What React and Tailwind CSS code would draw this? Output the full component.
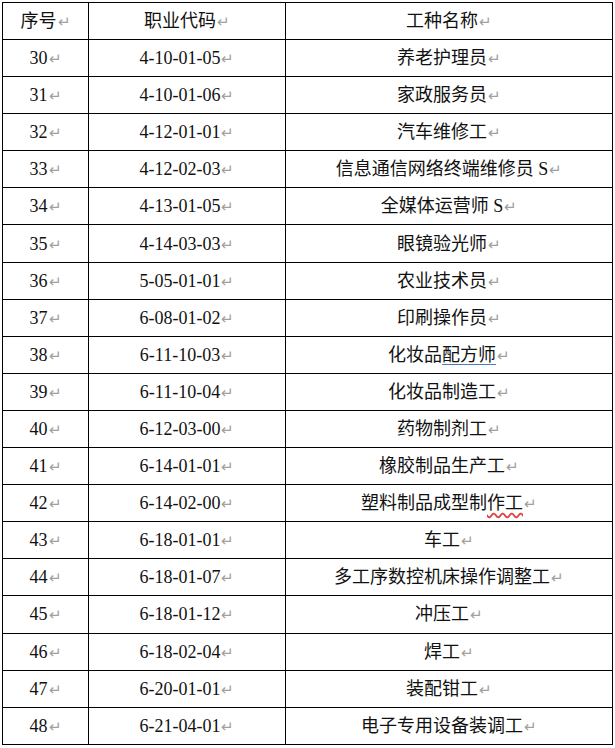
const rows = [
  ["30", "4-10-01-05", "养老护理员"],
  ["31", "4-10-01-06", "家政服务员"],
  ["32", "4-12-01-01", "汽车维修工"],
  ["33", "4-12-02-03", "信息通信网络终端维修员 S"],
  ["34", "4-13-01-05", "全媒体运营师 S"],
  ["35", "4-14-03-03", "眼镜验光师"],
  ["36", "5-05-01-01", "农业技术员"],
  ["37", "6-08-01-02", "印刷操作员"],
  ["38", "6-11-10-03", "化妆品配方师"],
  ["39", "6-11-10-04", "化妆品制造工"],
  ["40", "6-12-03-00", "药物制剂工"],
  ["41", "6-14-01-01", "橡胶制品生产工"],
  ["42", "6-14-02-00", "塑料制品成型制作工"],
  ["43", "6-18-01-01", "车工"],
  ["44", "6-18-01-07", "多工序数控机床操作调整工"],
  ["45", "6-18-01-12", "冲压工"],
  ["46", "6-18-02-04", "焊工"],
  ["47", "6-20-01-01", "装配钳工"],
  ["48", "6-21-04-01", "电子专用设备装调工"],
]

function Mark() {
  return <span className="text-[15px] text-[#a0a0a0] ml-[1px]">↵</span>
}

function Name({ text }) {
  if (text === "化妆品配方师") {
    return (
      <>
        化妆品<span className="underline decoration-[#4a7ebb] underline-offset-[3px]">配方师</span>
      </>
    )
  }
  if (text === "塑料制品成型制作工") {
    return (
      <>
        塑料制品成型制<span className="underline decoration-wavy decoration-[#e04040] underline-offset-[3px]">作工</span>
      </>
    )
  }
  return text
}

export default function App() {
  const font = { fontFamily: '"Liberation Serif", "Noto Sans CJK SC", serif' }
  return (
    <div className="w-[615px] h-[748px] bg-white pt-[2px] pl-[2px]" style={font}>
      <table className="border-collapse text-[#111] leading-none">
        <colgroup>
          <col className="w-[86px]" />
          <col className="w-[197px]" />
          <col className="w-[327px]" />
        </colgroup>
        <thead>
          <tr className="h-[37px]">
            <th className="border border-black font-normal text-[18px]">序号<Mark /></th>
            <th className="border border-black font-normal text-[18px]">职业代码<Mark /></th>
            <th className="border border-black font-normal text-[18px]">工种名称<Mark /></th>
          </tr>
        </thead>
        <tbody>
          {rows.map(r => (
            <tr key={r[0]} className="h-[37.1px]">
              <td className="border border-black text-center text-[18px]">{r[0]}<Mark /></td>
              <td className="border border-black text-center text-[18px]">{r[1]}<Mark /></td>
              <td className="border border-black text-center text-[18px]"><Name text={r[2]} /><Mark /></td>
            </tr>
          ))}
        </tbody>
      </table>
    </div>
  )
}
